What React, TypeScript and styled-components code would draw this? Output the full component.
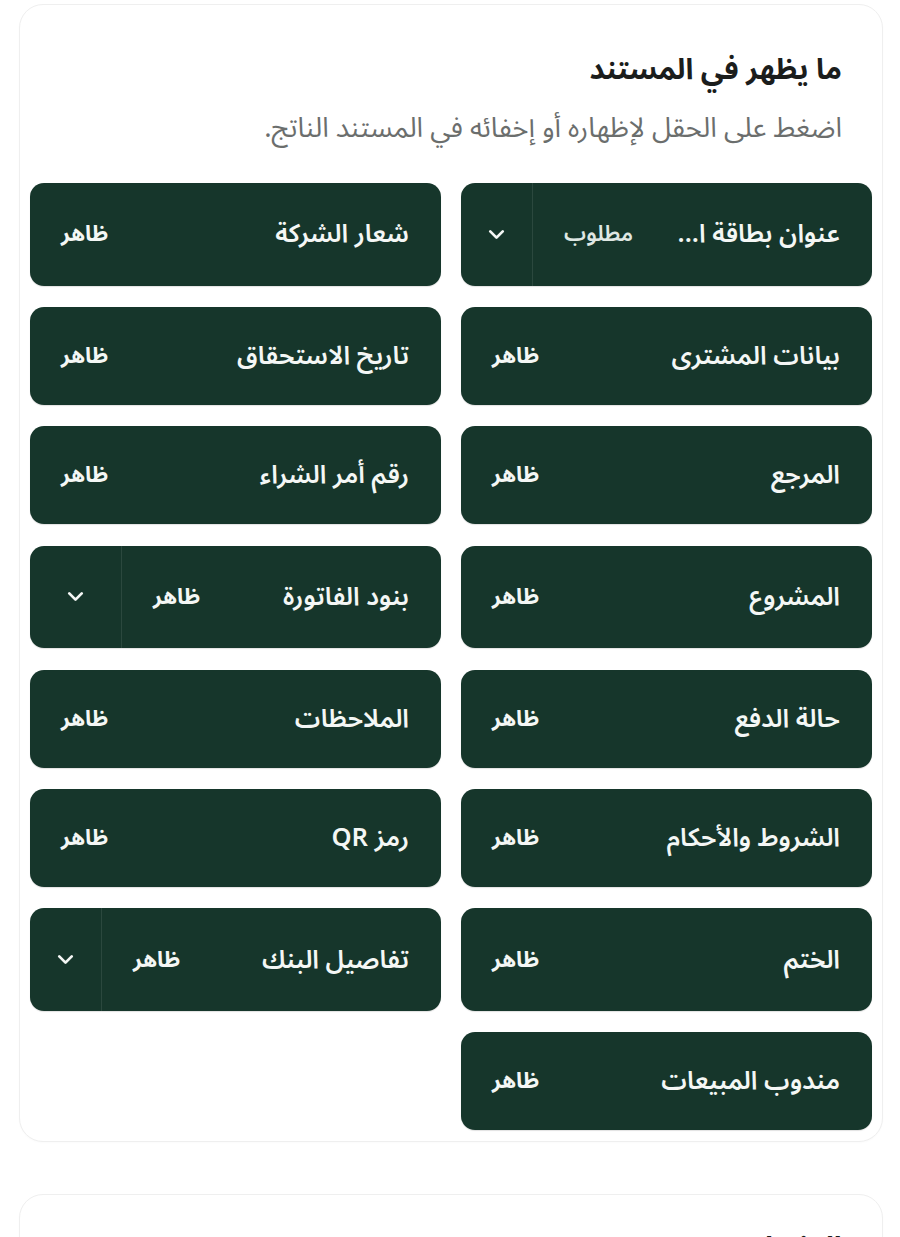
import styled, { createGlobalStyle } from 'styled-components';

const GlobalStyle = createGlobalStyle`
    html, body {
        margin: 0;
        padding: 0;
        background: #ffffff;
    }

    body {
        font-family: "Noto Sans Arabic", "Noto Kufi Arabic", "DejaVu Sans", sans-serif;
        color: #1c1f1e;
    }
`;

const Page = styled.div`
    direction: rtl;
    display: flex;
    flex-direction: column;
    gap: 52px;
    padding: 4px 17px 0 19px;
    height: 1237px;
    overflow: hidden;
    box-sizing: border-box;
`;

const Card = styled.section`
    background: #ffffff;
    border: 1px solid #efefef;
    border-radius: 24px;
    padding: 0 10px 11px;
    box-shadow: 0 1px 2px rgb(0 0 0 / 2%);
    flex-shrink: 0;
`;

const Header = styled.header<{ compact?: boolean }>`
    padding: ${({ compact }) => (compact ? '33px 30px 20px' : '45px 30px 37px')};
`;

const Title = styled.h2`
    margin: 0;
    font-size: 29px;
    font-weight: 700;
    line-height: 40px;
    color: #1b1d1c;
`;

const Subtitle = styled.p`
    margin: 20px 0 0;
    font-size: 27.5px;
    font-weight: 400;
    line-height: 36px;
    color: #6b6e6d;
`;

const Grid = styled.div`
    display: grid;
    grid-template-columns: 1fr 1fr;
    column-gap: 20px;
    row-gap: 21.4px;
`;

const Item = styled.div`
    display: flex;
    min-height: 98px;
    background: #16362b;
    border-radius: 14px;
    overflow: hidden;
    color: #f4f7f5;
    box-shadow: 0 1px 1px rgb(0 0 0 / 12%);
`;

const Main = styled.button`
    flex: 1;
    min-width: 0;
    display: flex;
    align-items: center;
    gap: 26px;
    padding: 0 32px 0 31px;
    background: none;
    border: none;
    color: inherit;
    font: inherit;
    text-align: right;
    cursor: pointer;
`;

const Label = styled.span`
    flex: 1;
    min-width: 0;
    font-size: 25.5px;
    font-weight: 600;
    white-space: nowrap;
    overflow: hidden;
    text-overflow: ellipsis;
`;

const Status = styled.span<{ muted?: boolean }>`
    flex-shrink: 0;
    font-size: 22px;
    font-weight: ${({ muted }) => (muted ? 600 : 700)};
    color: ${({ muted }) => (muted ? '#dfe7e3' : '#f4f7f5')};
`;

const Toggle = styled.button<{ width: number }>`
    display: flex;
    align-items: center;
    justify-content: center;
    width: ${({ width }) => width}px;
    min-height: 102.5px;
    flex-shrink: 0;
    background: none;
    border: none;
    border-right: 1px solid rgb(255 255 255 / 9%);
    color: #f4f7f5;
    cursor: pointer;
`;

const Chevron = () => (
    <svg width="25" height="25" viewBox="0 0 24 24" fill="none" stroke="currentColor" strokeWidth="2.6" strokeLinecap="round" strokeLinejoin="round">
        <path d="m6 9 6 6 6-6" />
    </svg>
);

type Field = {
    label: string;
    status: string;
    toggle?: number;
    muted?: boolean;
};

const fields: Field[] = [
    { label: 'عنوان بطاقة ا...', status: 'مطلوب', toggle: 72, muted: true },
    { label: 'شعار الشركة', status: 'ظاهر' },
    { label: 'بيانات المشترى', status: 'ظاهر' },
    { label: 'تاريخ الاستحقاق', status: 'ظاهر' },
    { label: 'المرجع', status: 'ظاهر' },
    { label: 'رقم أمر الشراء', status: 'ظاهر' },
    { label: 'المشروع', status: 'ظاهر' },
    { label: 'بنود الفاتورة', status: 'ظاهر', toggle: 92 },
    { label: 'حالة الدفع', status: 'ظاهر' },
    { label: 'الملاحظات', status: 'ظاهر' },
    { label: 'الشروط والأحكام', status: 'ظاهر' },
    { label: 'رمز QR', status: 'ظاهر' },
    { label: 'الختم', status: 'ظاهر' },
    { label: 'تفاصيل البنك', status: 'ظاهر', toggle: 72 },
    { label: 'مندوب المبيعات', status: 'ظاهر' },
];

function FieldItem({ field }: { field: Field }) {
    return (
        <Item>
            <Main>
                <Label>{field.label}</Label>
                <Status muted={field.muted}>{field.status}</Status>
            </Main>
            {field.toggle && (
                <Toggle width={field.toggle} aria-label="خيارات">
                    <Chevron />
                </Toggle>
            )}
        </Item>
    );
}

export default function App() {
    return (
        <>
            <GlobalStyle />
            <Page>
                <Card>
                    <Header>
                        <Title>ما يظهر في المستند</Title>
                        <Subtitle>اضغط على الحقل لإظهاره أو إخفائه في المستند الناتج.</Subtitle>
                    </Header>
                    <Grid>
                        {fields.map(field => (
                            <FieldItem key={field.label} field={field} />
                        ))}
                    </Grid>
                </Card>
                <Card>
                    <Header compact>
                        <Title>التذييل</Title>
                    </Header>
                </Card>
            </Page>
        </>
    );
}
